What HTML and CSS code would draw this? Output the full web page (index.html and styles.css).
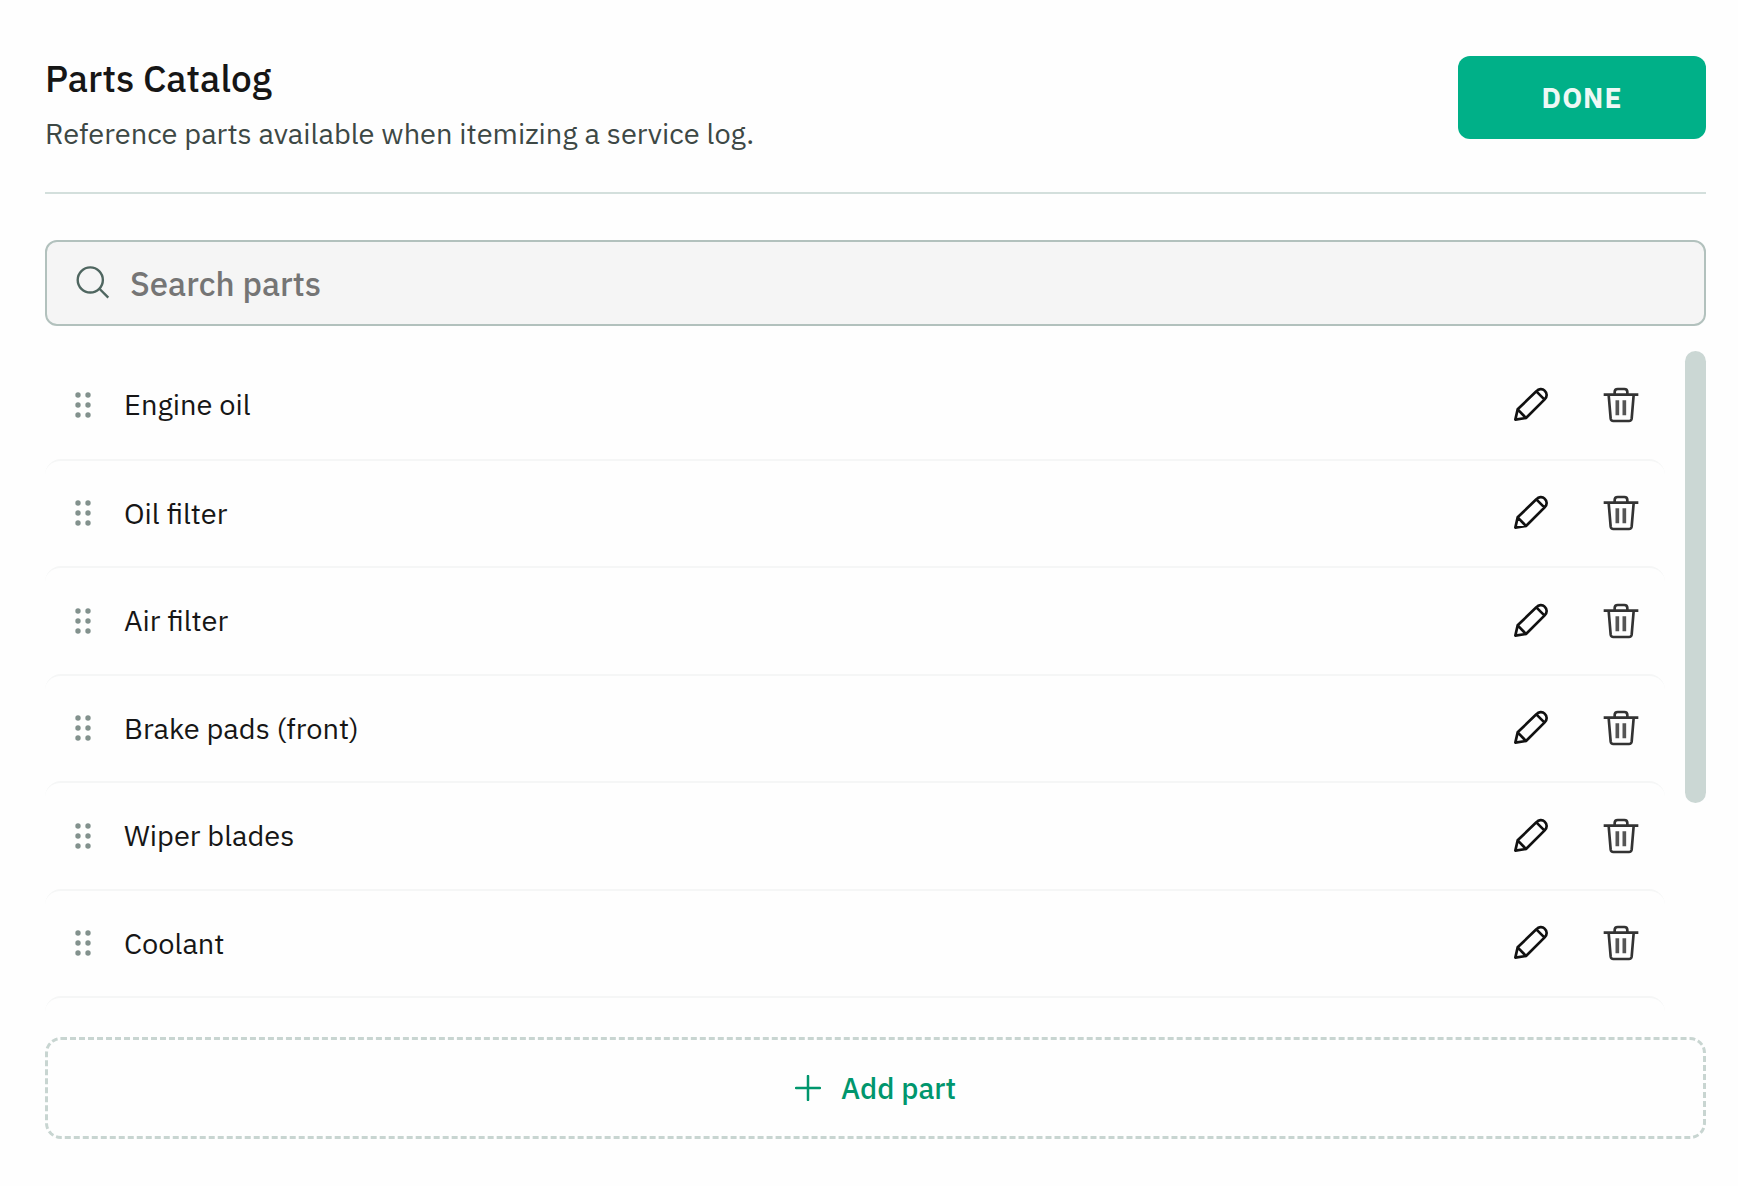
FILE: index.html
```html
<!DOCTYPE html>
<html lang="en">
<head>
  <meta charset="UTF-8" />
  <meta name="viewport" content="width=device-width, initial-scale=1" />
  <title>Parts Catalog</title>
  <link rel="stylesheet" href="styles.css">
</head>
<body>

  <!-- shared icons -->
  <svg class="sprite" aria-hidden="true">
    <symbol id="grip" viewBox="0 0 16 26">
      <circle cx="3" cy="3" r="2.7" /><circle cx="13" cy="3" r="2.7" />
      <circle cx="3" cy="13" r="2.7" /><circle cx="13" cy="13" r="2.7" />
      <circle cx="3" cy="23" r="2.7" /><circle cx="13" cy="23" r="2.7" />
    </symbol>
    <symbol id="pencil" viewBox="0 0 108 108">
      <path d="M7 98 L14 67 L70 13 C77 5 88 4 95 11 C103 18 103 29 95 37 L39 93 Z M70 13 L94 37 M14 67 L39 93" />
    </symbol>
    <symbol id="trash" viewBox="0 0 108 108">
      <path d="M2 23 H106 M35 22 V15 Q35 6 44 6 H64 Q73 6 73 15 V22 M17 24 L23 95 Q24 102 31 102 H78 Q85 102 86 95 L92 24" />
      <path class="bars" d="M43 40 V85 M64 40 V85" />
    </symbol>
  </svg>

  <main class="catalog">
    <header class="header">
      <div class="heading">
        <h1>Parts Catalog</h1>
        <p>Reference parts available when itemizing a service log.</p>
      </div>
      <button type="button" class="done">DONE</button>
    </header>

    <label class="search">
      <svg viewBox="0 0 100 100" aria-hidden="true">
        <circle cx="42" cy="41" r="37" />
        <path d="M69 67 L95 93" />
      </svg>
      <input type="text" id="search" placeholder="Search parts" aria-label="Search parts" />
    </label>

    <div class="list-wrap">
      <ul class="list">
        <li class="row">
          <svg class="grip"><use href="#grip" /></svg>
          <span class="name">Engine oil</span>
          <button type="button" class="icon edit" aria-label="Edit"><svg><use href="#pencil" /></svg></button>
          <button type="button" class="icon delete" aria-label="Delete"><svg><use href="#trash" /></svg></button>
        </li>
        <li class="row">
          <svg class="grip"><use href="#grip" /></svg>
          <span class="name">Oil filter</span>
          <button type="button" class="icon edit" aria-label="Edit"><svg><use href="#pencil" /></svg></button>
          <button type="button" class="icon delete" aria-label="Delete"><svg><use href="#trash" /></svg></button>
        </li>
        <li class="row">
          <svg class="grip"><use href="#grip" /></svg>
          <span class="name">Air filter</span>
          <button type="button" class="icon edit" aria-label="Edit"><svg><use href="#pencil" /></svg></button>
          <button type="button" class="icon delete" aria-label="Delete"><svg><use href="#trash" /></svg></button>
        </li>
        <li class="row">
          <svg class="grip"><use href="#grip" /></svg>
          <span class="name">Brake pads (front)</span>
          <button type="button" class="icon edit" aria-label="Edit"><svg><use href="#pencil" /></svg></button>
          <button type="button" class="icon delete" aria-label="Delete"><svg><use href="#trash" /></svg></button>
        </li>
        <li class="row">
          <svg class="grip"><use href="#grip" /></svg>
          <span class="name">Wiper blades</span>
          <button type="button" class="icon edit" aria-label="Edit"><svg><use href="#pencil" /></svg></button>
          <button type="button" class="icon delete" aria-label="Delete"><svg><use href="#trash" /></svg></button>
        </li>
        <li class="row">
          <svg class="grip"><use href="#grip" /></svg>
          <span class="name">Coolant</span>
          <button type="button" class="icon edit" aria-label="Edit"><svg><use href="#pencil" /></svg></button>
          <button type="button" class="icon delete" aria-label="Delete"><svg><use href="#trash" /></svg></button>
        </li>
        <li class="row"></li>
      </ul>
      <div class="scrollbar"><div class="thumb"></div></div>
    </div>

    <button type="button" class="add">
      <svg viewBox="0 0 26 26" aria-hidden="true"><path d="M13 1 V25 M1 13 H25" /></svg>
      Add part
    </button>
  </main>

</body>
</html>
```
FILE: styles.css
```css
* {
  box-sizing: border-box;
}

body {
  margin: 0;
  background: #fefefe;
  color: #161616;
  font-family: "IBM Plex Sans", "Noto Sans", sans-serif;
  font-size: 29px;
}

button, input {
  font-family: inherit;
}

svg {
  display: block;
  flex: none;
}

.sprite {
  position: absolute;
  width: 0;
  height: 0;
}

.catalog {
  padding: 56px 32px 40px 45px;
}

.header {
  display: flex;
  justify-content: space-between;
  align-items: flex-start;
  height: 138px;
  border-bottom: 2px solid #d3dfdc;
}

h1 {
  margin: 0;
  font-size: 37px;
  line-height: 44px;
  font-weight: 500;
}

.heading p {
  margin: 13px 0 0;
  line-height: 40px;
  color: #3d4845;
}

.done {
  width: 248px;
  height: 83px;
  border: none;
  border-radius: 12px;
  background: #00b088;
  color: #eef8f5;
  font-size: 28px;
  font-weight: 700;
  letter-spacing: 1px;
  cursor: pointer;
}

.search {
  display: flex;
  align-items: center;
  gap: 20px;
  height: 86px;
  margin-top: 46px;
  padding: 0 29px;
  border: 2px solid #b2c1bd;
  border-radius: 12px;
  background: #f5f5f5;
}

.search svg {
  width: 34px;
  height: 34px;
  fill: none;
  stroke: #4f6660;
  stroke-width: 7;
}

.search input {
  flex: 1;
  min-width: 0;
  padding: 0;
  border: none;
  outline: none;
  background: none;
  color: #161616;
  font-size: 33px;
  font-weight: 500;
}

.search input::placeholder {
  color: #757575;
  opacity: 1;
}

.list-wrap {
  display: flex;
  gap: 20px;
  height: 661px;
  margin-top: 25px;
}

.list {
  flex: 1;
  margin: 0;
  padding: 0;
  overflow: hidden;
  list-style: none;
  line-height: 1.5;
}

.row {
  display: flex;
  align-items: center;
  padding: 32px 24px 32px 30px;
}

.row + .row {
  padding-top: 31px;
  padding-bottom: 31px;
  border-top: 2px solid #f5f6f6;
  border-radius: 16px;
}

.grip {
  width: 16px;
  height: 26px;
  margin-right: 33px;
  fill: #82918d;
}

.name {
  flex: 1;
}

.icon {
  display: flex;
  align-items: center;
  justify-content: center;
  width: 40px;
  height: 40px;
  padding: 0;
  border: none;
  background: none;
  cursor: pointer;
}

.icon + .icon {
  margin-left: 50px;
}

.icon svg {
  width: 36px;
  height: 36px;
  fill: none;
  stroke: #111;
  stroke-width: 8;
  stroke-linejoin: round;
}

.icon.delete svg {
  stroke: #333;
}

.bars {
  stroke: #555;
  stroke-width: 11;
}

.scrollbar {
  width: 21px;
}

.thumb {
  height: 452px;
  border-radius: 11px;
  background: #cbd7d4;
}

.add {
  display: flex;
  align-items: center;
  justify-content: center;
  gap: 20px;
  width: 100%;
  height: 102px;
  margin-top: 25px;
  border: 3px dashed #c8d5d1;
  border-radius: 16px;
  background: none;
  color: #00966d;
  font-size: 29px;
  font-weight: 500;
  cursor: pointer;
}

.add svg {
  width: 26px;
  height: 26px;
  stroke: currentColor;
  stroke-width: 2.5;
  stroke-linecap: round;
}
```
